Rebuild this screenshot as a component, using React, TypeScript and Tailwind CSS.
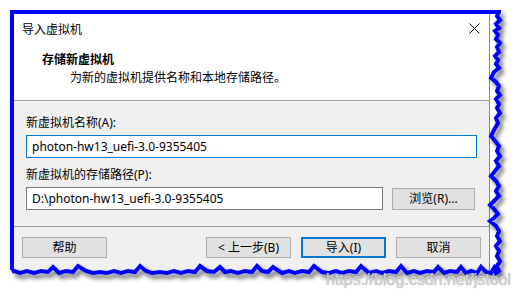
import React from "react";

const rightPts: [number, number][] = [
  [499, 12], [497, 16], [500, 20], [496, 24], [499, 28], [495, 31], [498, 35], [496, 39], [500, 43], [497, 47],
  [499, 52], [495, 56], [498, 60], [496, 64], [499, 68], [494, 72], [491, 78], [496, 82], [499, 86], [497, 91],
  [500, 95], [496, 99], [499, 104], [497, 108], [500, 113], [496, 118], [498, 123], [494, 130], [491, 136], [495, 141],
  [499, 146], [497, 151], [500, 156], [496, 161], [499, 166], [495, 171], [491, 176], [496, 181], [499, 186], [496, 191],
  [499, 196], [494, 201], [490, 205], [495, 210], [498, 214], [494, 218], [490, 221], [496, 226], [499, 231], [497, 236],
  [500, 241], [496, 246], [499, 251], [497, 256], [500, 261], [497, 266], [499, 271],
];

const bottomPts: [number, number][] = [
  [496, 273], [494, 268], [491, 273], [486, 272], [481, 267], [477, 273], [471, 271], [466, 273], [461, 267], [457, 272],
  [450, 271], [444, 273], [438, 267], [434, 272], [427, 271], [420, 273], [414, 271], [407, 273], [401, 266], [396, 272],
  [389, 271], [382, 273], [376, 271], [369, 273], [361, 266], [356, 272], [349, 271], [342, 273], [336, 271], [329, 273],
  [322, 272], [314, 266], [309, 272], [302, 271], [295, 273], [289, 271], [282, 273], [273, 267], [268, 272], [262, 271],
  [257, 266], [252, 272], [245, 271], [238, 273], [231, 271], [225, 272], [220, 267], [214, 272], [207, 271], [200, 266],
  [195, 272], [188, 271], [181, 273], [174, 271], [167, 273], [160, 272], [152, 273], [146, 271], [140, 266], [135, 272],
  [128, 271], [121, 273], [114, 271], [107, 273], [100, 272], [93, 273], [86, 271], [78, 266], [73, 272], [66, 271],
  [59, 273], [53, 267], [48, 272], [41, 271], [34, 273], [27, 271], [20, 273], [14, 271], [12, 272],
];

const toStr = (p: [number, number][]) => p.map(([x, y]) => `${x},${y}`).join(" ");

const font = {
  fontFamily: '"Segoe UI", "Noto Sans", "Noto Sans CJK SC", sans-serif',
};

function Btn({ children, def }: { children: React.ReactNode; def?: boolean }) {
  return (
    <div
      className={
        "flex h-[21px] w-[85px] items-center justify-center bg-[#e1e1e1] text-[12px] text-black " +
        (def ? "border-2 border-[#0078d7]" : "border border-[#adadad]")
      }
    >
      {children}
    </div>
  );
}

export default function App() {
  return (
    <div className="relative h-[298px] w-[522px] overflow-hidden bg-white" style={font}>
      <div className="ml-[10px] mt-[10px] flex w-[490px] border-l-4 border-t-4 border-[#0000ff] bg-white">
        <div className="flex h-[256px] w-[476px] flex-col border-r border-[#888888] bg-[#f0f0f0]">
          {/* header */}
          <div className="relative flex h-[86px] flex-col bg-white pl-[8px] pt-[8px] text-[12px] leading-[16px] text-black">
            <div>导入虚拟机</div>
            <div className="mt-[14px] pl-[20px] font-bold">存储新虚拟机</div>
            <div className="mt-[2px] pl-[48px]">为新的虚拟机提供名称和本地存储路径。</div>
            <svg className="absolute left-[455px] top-[9px]" width="11" height="11" viewBox="0 0 11 11">
              <path d="M0.5 0.5 L10.5 10.5 M10.5 0.5 L0.5 10.5" stroke="#111" strokeWidth="1" fill="none" />
            </svg>
          </div>
          <div className="h-px bg-[#a0a0a0]" />
          {/* body */}
          <div className="flex flex-col pl-[12px] pr-[12px] pt-[14px] text-[12px] leading-[16px] text-black">
            <div>新虚拟机名称(A):</div>
            <div className="mt-[4px] flex h-[23px] w-[451px] items-center border border-[#0078d7] bg-white pl-[5px]">
              photon-hw13_uefi-3.0-9355405
            </div>
            <div className="mt-[9px]">新虚拟机的存储路径(P):</div>
            <div className="mt-[4px] flex items-center gap-[9px]">
              <div className="flex h-[23px] w-[357px] items-center border border-[#7a7a7a] bg-white pl-[5px]">
                D:\photon-hw13_uefi-3.0-9355405
              </div>
              <div className="flex h-[22px] w-[83px] items-center justify-center border border-[#adadad] bg-[#e1e1e1]">
                浏览(R)...
              </div>
            </div>
          </div>
          <div className="mt-[16px] h-px bg-[#a0a0a0]" />
          {/* footer */}
          <div className="flex pl-[8px] pt-[10px]">
            <Btn>帮助</Btn>
            <div className="ml-[99px]">
              <Btn>&lt; 上一步(B)</Btn>
            </div>
            <div className="ml-[10px]">
              <Btn def>导入(I)</Btn>
            </div>
            <div className="ml-[10px]">
              <Btn>取消</Btn>
            </div>
          </div>
        </div>
      </div>

      <svg className="pointer-events-none absolute left-0 top-0" width="522" height="298" viewBox="0 0 522 298">
        <defs>
          <filter id="sh" x="-10%" y="-10%" width="120%" height="130%">
            <feDropShadow dx="3" dy="4" stdDeviation="2.2" floodColor="#000" floodOpacity="0.55" />
          </filter>
        </defs>
        <polygon points={`${toStr(bottomPts)} 8,298 522,298 522,271`} fill="#ffffff" />
        <polyline
          points={`499,10 ${toStr(rightPts)} ${toStr(bottomPts)}`}
          fill="none"
          stroke="#0000ff"
          strokeWidth="4"
          strokeLinejoin="miter"
          filter="url(#sh)"
        />
      </svg>

      <div
        className="absolute left-[326px] top-[270px] text-[16px] leading-[20px] text-[#d4d4d4]"
        style={{ fontFamily: '"Liberation Sans", Arial, sans-serif', textShadow: "0 0 1px #999" }}
      >
        https://blog.csdn.net/jstool
      </div>
    </div>
  );
}
